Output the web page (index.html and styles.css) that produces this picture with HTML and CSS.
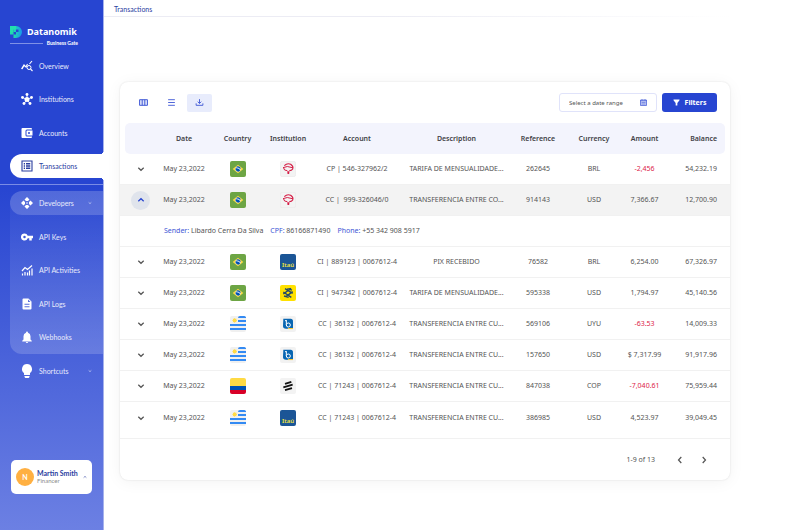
FILE: index.html
```html
<!DOCTYPE html>
<html lang="en">
<head>
<meta charset="utf-8">
<meta name="viewport" content="width=device-width, initial-scale=1">
<title>Datanomik - Transactions</title>
<link rel="stylesheet" href="styles.css">
</head>
<body>
<svg class="sprite" aria-hidden="true">
  <symbol id="down" viewBox="0 0 8 8"><path d="M1.3 2.7 4 5.3l2.7-2.6" fill="none" stroke="currentColor" stroke-width="1.2"/></symbol>
  <symbol id="up" viewBox="0 0 8 8"><path d="M1.3 5.3 4 2.7l2.7 2.6" fill="none" stroke="currentColor" stroke-width="1.2"/></symbol>
  <symbol id="brazil" viewBox="0 0 24 24"><rect width="24" height="24" rx="3" fill="#6da544"/><path d="M12 5.500 20 12l-8 6.500L4 12z" fill="#ffda44"/><circle cx="12" cy="12" r="3.900" fill="#e8f1f7"/><path d="M8.300 11q4.500-.8 7.100 3A3.900 3.900 0 0 1 8.300 11zM9 9.500a3.900 3.900 0 0 1 6.900 3Q13.500 9.500 9 9.500z" fill="#0052b4"/></symbol>
  <symbol id="uruguay" viewBox="0 0 24 24"><rect width="24" height="24" rx="3" fill="#f0f0f0"/><path d="M12 3a3 3 0 0 1 3-3h6q2 0 3 2v1H12zM12 6h12v3H12zM0 12h24v3H0zM0 18h24v3H0z" fill="#338af3"/><path d="m7 3 1 1.300 1.700-.3-.3 1.700 1.300 1-1.300 1 .3 1.700-1.700-.3-1 1.300-1-1.300-1.700.3.3-1.700-1.300-1 1.300-1L4.300 4l1.700.3z" fill="#ffda44"/></symbol>
  <symbol id="colombia" viewBox="0 0 24 24"><path d="M0 12V3a3 3 0 0 1 3-3h18a3 3 0 0 1 3 3v9z" fill="#ffda44"/><path d="M0 12h24v6H0z" fill="#0052b4"/><path d="M0 18h24v3a3 3 0 0 1-3 3H3a3 3 0 0 1-3-3z" fill="#d80027"/></symbol>
  <symbol id="bradesco" viewBox="0 0 24 24"><rect x=".5" y=".5" width="23" height="23" rx="3" fill="#f3f3f3" stroke="#e9e9e9"/><path d="M6.500 7Q11 2.500 16 5q4.500 3 3 7-1.500 2.500-5 2.500" fill="none" stroke="#d51c45" stroke-width="1.800"/><path d="M4.500 10q6-3.500 14 0M5.500 10.500q0 4 5.500 4" fill="none" stroke="#d51c45" stroke-width="1.500"/><path d="M10.800 15.500h3.400l-.5 4h-2.400z" fill="#d51c45"/></symbol>
  <symbol id="bb" viewBox="0 0 24 24"><rect width="24" height="24" rx="3" fill="#ffe100"/><path d="M7.500 5.500 19 12.500M5 10.500l12 8M16.500 5 5 13.500M19 10 7.500 18.500M11 5.500l7 2M6 16.500l7 2" fill="none" stroke="#244a68" stroke-width="2.100"/></symbol>
  <symbol id="bind" viewBox="0 0 24 24"><rect width="24" height="24" rx="3" fill="#f2f2f2"/><path d="M5 4h11q3.500 0 3.500 4v11H9q-4.500 0-4.500-4z" fill="#0866b2"/><path d="M12 18h7.500v1.600H12z" fill="#f4c93c"/><path d="M9.500 6.500v7q0 3 3 3t3-3q0-3-3-3-2 0-3 2M7.500 7H10" fill="none" stroke="#fff" stroke-width="1.500"/></symbol>
  <symbol id="bancolombia" viewBox="0 0 24 24"><rect width="24" height="24" rx="3" fill="#f3f3f3"/><path d="m7.500 8.800 9.500-3M5 14l14-4M7.500 18.200l10.500-3" fill="none" stroke="#111" stroke-width="2.800"/></symbol>
</svg>
<div class="app">
  <aside class="sidebar">
    <div class="brand">
      <div class="brand-row">
        <svg class="brand-mark" viewBox="0 0 24 24" aria-hidden="true"><defs><linearGradient id="mark"><stop offset=".3" stop-color="#1fdcae"/><stop offset="1" stop-color="#1897ee"/></linearGradient></defs><path fill="url(#mark)" d="M0 0h12a12 12 0 0 1 0 24H7v-7H0v-5h7v5h5v-5h5V7h-5v5H7V7z"/><path fill="#23dfae" d="M0 0h12v7H7v5H0z"/></svg>
        <span class="brand-name">Datanomik</span>
      </div>
      <div class="brand-sub"><span class="brand-line"></span>Business Gate</div>
    </div>
    <nav class="nav" aria-label="Main">
      <div class="group">
        <a class="item" href="#overview"><svg class="icon" viewBox="0 0 24 24"><path d="m1 18 5-8 4 4 3-6M17 8l5-6M2 18 6 11" fill="none" stroke="currentColor" stroke-width="2.200"/><circle cx="16" cy="15" r="4" fill="none" stroke="currentColor" stroke-width="2"/><path d="m19 18 4 4" stroke="currentColor" stroke-width="2.200"/></svg>Overview</a>
        <a class="item" href="#institutions"><svg class="icon" viewBox="0 0 24 24"><g fill="currentColor"><circle cx="12" cy="13" r="5"/><circle cx="12" cy="3" r="2.900"/><circle cx="3" cy="9" r="2.900"/><circle cx="21" cy="9" r="2.900"/><circle cx="6" cy="21" r="2.900"/><circle cx="18" cy="21" r="2.900"/></g><path d="M12 3v10L3 9m9 4 9-4m-9 4-6 8m6-8 6 8" fill="none" stroke="currentColor" stroke-width="1.600"/></svg>Institutions</a>
        <a class="item" href="#accounts"><svg class="icon" viewBox="0 0 24 24"><path fill="currentColor" fill-rule="evenodd" d="M3 2h17q2 0 2 2v1H12q-3 0-3 3v8q0 3 3 3h10v1q0 2-2 2H3q-2 0-2-2V4q0-2 2-2zm9 5h11v10H12q-1 0-1-1V8q0-1 1-1zm4 3a2 2 0 1 0 0 4 2 2 0 0 0 0-4z"/></svg>Accounts</a>
        <a class="item active" href="#transactions" aria-current="page"><svg class="icon" viewBox="0 0 24 24"><path d="M2 2h20v20H2z" fill="none" stroke="currentColor" stroke-width="2.200"/><path d="M5.500 7.500H8m2 0h8.500M5.500 12H8m2 0h8.500M5.500 16.500H8m2 0h8.500" stroke="currentColor" stroke-width="2.600"/></svg>Transactions</a>
      </div>
      <div class="submenu">
        <a class="item sub-head" href="#developers"><svg class="icon" viewBox="0 0 24 24"><path fill="currentColor" d="m12 0 5 5-3 3h-4L7 5zM12 24l5-5-3-3h-4l-3 3zM0 12l5-5 3 3v4l-3 3zM24 12l-5-5-3 3v4l3 3z"/><circle cx="12" cy="12" r="1.600" fill="currentColor"/></svg>Developers<svg class="caret"><use href="#down"/></svg></a>
        <div class="group">
          <a class="item" href="#keys"><svg class="icon" viewBox="0 0 24 24"><path fill="currentColor" fill-rule="evenodd" d="M7 5a7 7 0 0 1 6.500 4.500H24v5h-2.500V19h-5v-4.500h-3A7 7 0 1 1 7 5zm0 4.500a2.500 2.500 0 1 0 0 5 2.500 2.500 0 0 0 0-5z"/></svg>API Keys</a>
          <a class="item" href="#activities"><svg class="icon" viewBox="0 0 24 24"><path d="m2 14 6-7 5 4 9-8M3 23v-4m5 4v-7m5 7v-6m4 6V13m5 10V9" fill="none" stroke="currentColor" stroke-width="2.400"/></svg>API Activities</a>
          <a class="item" href="#logs"><svg class="icon" viewBox="0 0 24 24"><path fill="currentColor" fill-rule="evenodd" d="M5 1h10l6 6v14q0 2-2 2H5q-2 0-2-2V3q0-2 2-2zm9 2v5h5zM7 11.500v2h10v-2zm0 5v2h10v-2z"/></svg>API Logs</a>
          <a class="item" href="#webhooks"><svg class="icon" viewBox="0 0 24 24"><path fill="currentColor" d="M12 1q2 0 2 2.500 5 1.500 5 7V17l2.500 2.500V21h-19v-1.500L5 17v-6.500q0-5.500 5-7Q10 1 12 1zM9.500 22h5q-.5 2-2.500 2t-2.500-2z"/></svg>Webhooks</a>
        </div>
      </div>
      <a class="item shortcuts" href="#shortcuts"><svg class="icon bulb" viewBox="0 0 24 28"><path fill="currentColor" d="M12 0a10 10 0 0 1 6 18v3q0 1-1 1H7q-1 0-1-1v-3A10 10 0 0 1 12 0zM7 24h10v1.500q-1 2.500-2 2.500H9q-1 0-2-2.500z"/></svg>Shortcuts<svg class="caret"><use href="#down"/></svg></a>
    </nav>
    <button class="user" type="button">
      <span class="avatar">N</span>
      <span class="who"><strong>Martin Smith</strong><span>Financer</span></span>
      <svg class="caret"><use href="#up"/></svg>
    </button>
  </aside>
  <main class="main">
    <header class="topbar"><h1>Transactions</h1></header>
    <section class="card">
      <div class="toolbar">
        <button class="tool" type="button" aria-label="Columns"><svg viewBox="0 0 16 12"><path d="M1 1h14v10H1zM5.700 1v10M10.300 1v10" fill="#dfe4fa" stroke="currentColor" stroke-width="1.700"/></svg></button>
        <button class="tool" type="button" aria-label="Density"><svg viewBox="0 0 16 12"><path d="M2 1h12M2 6h12M2 11h12" stroke="currentColor" stroke-width="1.600"/></svg></button>
        <button class="tool on" type="button" aria-label="Download"><svg viewBox="0 0 16 12"><path d="M8 0v7.500M4.800 4.500 8 7.700l3.200-3.200M2 7.500V11h12V7.500" fill="none" stroke="currentColor" stroke-width="1.600"/></svg></button>
        <label class="date"><input type="text" placeholder="Select a date range" aria-label="Date range"><svg viewBox="0 0 14 14"><path d="M1 2h12v11H1z" fill="#c3cbf4" stroke="currentColor" stroke-width="1.400"/><path d="M1 3.500h12M4 0v3m6-3v3M3 7h8M3 10h8" stroke="currentColor" stroke-width="1"/></svg></label>
        <button class="filters" type="button"><svg viewBox="0 0 14 14"><path d="M1 1h12v1.500L8.700 8v5H5.300V8L1 2.500z" fill="currentColor"/></svg>Filters</button>
      </div>
      <table>
        <colgroup><col class="c-toggle"><col class="c-date"><col class="c-country"><col class="c-inst"><col class="c-account"><col class="c-desc"><col class="c-ref"><col class="c-cur"><col class="c-amount"><col class="c-balance"></colgroup>
        <thead><tr><th></th><th>Date</th><th>Country</th><th>Institution</th><th>Account</th><th>Description</th><th>Reference</th><th>Currency</th><th>Amount</th><th>Balance</th></tr></thead>
        <tbody>
          <tr><td><button class="toggle" type="button" aria-label="Expand"><svg><use href="#down"/></svg></button></td><td>May 23,2022</td><td><svg class="badge"><use href="#brazil"/></svg></td><td><svg class="badge"><use href="#bradesco"/></svg></td><td>CP | 546-327962/2</td><td>TARIFA DE MENSUALIDADE...</td><td>262645</td><td>BRL</td><td class="neg">-2,456</td><td>54,232.19</td></tr>
          <tr class="open"><td><button class="toggle" type="button" aria-label="Collapse"><svg><use href="#up"/></svg></button></td><td>May 23,2022</td><td><svg class="badge"><use href="#brazil"/></svg></td><td><svg class="badge"><use href="#bradesco"/></svg></td><td>CC |&nbsp; 999-326046/0</td><td>TRANSFERENCIA ENTRE CO...</td><td>914143</td><td>USD</td><td>7,366.67</td><td>12,700.90</td></tr>
          <tr class="details"><td></td><td colspan="9"><div class="facts"><span><b>Sender:</b> Libardo Cerra Da Silva</span><span><b>CPF:</b> 86166871490</span><span><b>Phone:</b> +55 342 908 5917</span></div></td></tr>
          <tr><td><button class="toggle" type="button" aria-label="Expand"><svg><use href="#down"/></svg></button></td><td>May 23,2022</td><td><svg class="badge"><use href="#brazil"/></svg></td><td><div class="badge itau">Itaú</div></td><td>CI | 889123 | 0067612-4</td><td>PIX RECEBIDO</td><td>76582</td><td>BRL</td><td>6,254.00</td><td>67,326.97</td></tr>
          <tr><td><button class="toggle" type="button" aria-label="Expand"><svg><use href="#down"/></svg></button></td><td>May 23,2022</td><td><svg class="badge"><use href="#brazil"/></svg></td><td><svg class="badge"><use href="#bb"/></svg></td><td>CI | 947342 | 0067612-4</td><td>TARIFA DE MENSUALIDADE...</td><td>595338</td><td>USD</td><td>1,794.97</td><td>45,140.56</td></tr>
          <tr><td><button class="toggle" type="button" aria-label="Expand"><svg><use href="#down"/></svg></button></td><td>May 23,2022</td><td><svg class="badge"><use href="#uruguay"/></svg></td><td><svg class="badge"><use href="#bind"/></svg></td><td>CC | 36132 | 0067612-4</td><td>TRANSFERENCIA ENTRE CU...</td><td>569106</td><td>UYU</td><td class="neg">-63.53</td><td>14,009.33</td></tr>
          <tr><td><button class="toggle" type="button" aria-label="Expand"><svg><use href="#down"/></svg></button></td><td>May 23,2022</td><td><svg class="badge"><use href="#uruguay"/></svg></td><td><svg class="badge"><use href="#bind"/></svg></td><td>CC | 36132 | 0067612-4</td><td>TRANSFERENCIA ENTRE CU...</td><td>157650</td><td>USD</td><td>$ 7,317.99</td><td>91,917.96</td></tr>
          <tr><td><button class="toggle" type="button" aria-label="Expand"><svg><use href="#down"/></svg></button></td><td>May 23,2022</td><td><svg class="badge"><use href="#colombia"/></svg></td><td><svg class="badge"><use href="#bancolombia"/></svg></td><td>CC | 71243 | 0067612-4</td><td>TRANSFERENCIA ENTRE CU...</td><td>847038</td><td>COP</td><td class="neg">-7,040.61</td><td>75,959.44</td></tr>
          <tr><td><button class="toggle" type="button" aria-label="Expand"><svg><use href="#down"/></svg></button></td><td>May 23,2022</td><td><svg class="badge"><use href="#uruguay"/></svg></td><td><div class="badge itau">Itaú</div></td><td>CC | 71243 | 0067612-4</td><td>TRANSFERENCIA ENTRE CU...</td><td>386985</td><td>USD</td><td>4,523.97</td><td>39,049.45</td></tr>
        </tbody>
      </table>
      <footer class="pager">
        <span>1-9 of 13</span>
        <button type="button" aria-label="Previous page"><svg viewBox="0 0 8 8"><path d="M5.300 1 2.500 4l2.800 3" fill="none" stroke="currentColor" stroke-width="1.200"/></svg></button>
        <button type="button" aria-label="Next page"><svg viewBox="0 0 8 8"><path d="M2.700 1l2.800 3-2.800 3" fill="none" stroke="currentColor" stroke-width="1.200"/></svg></button>
      </footer>
    </section>
  </main>
</div>
</body>
</html>
```
FILE: styles.css
```css
* { box-sizing: border-box; }

body {
  margin: 0;
  background: #fff;
  color: #545454;
  font-family: "Noto Sans", "Open Sans", sans-serif;
  font-size: 7px;
  line-height: 10px;
}

button, input {
  margin: 0;
  padding: 0;
  border: 0;
  background: none;
  color: inherit;
  font: inherit;
}

svg { display: block; flex: none; }
.sprite { position: absolute; width: 0; height: 0; }

.app { display: flex; min-height: 100vh; }

/* Sidebar */
.sidebar {
  display: flex;
  flex-direction: column;
  flex: none;
  width: 104px;
  padding-bottom: 36px;
  border-right: 1px solid #a6b2ec;
  background: linear-gradient(#2745d1 35%, #6c80e3);
  color: #e9ecfb;
  font-family: Lato, sans-serif;
}

.brand { padding: 26px 10px 0; }
.brand-row { display: flex; align-items: center; gap: 5px; height: 12px; }
.brand-mark { width: 12px; height: 12px; }
.brand-name { color: #fff; font: 700 9px/12px "Noto Sans", sans-serif; }
.brand-sub {
  display: flex;
  align-items: center;
  gap: 4px;
  width: 68px;
  padding-top: 2px;
  color: #fff;
  font-size: 5px;
  line-height: 6px;
  font-weight: 700;
  white-space: nowrap;
}
.brand-line { flex: 1; height: 1px; background: #8091e6; }

.nav { padding-top: 3px; }
.group { display: grid; grid-auto-rows: 1fr; align-items: center; height: 134px; }
.item {
  position: relative;
  display: flex;
  align-items: center;
  gap: 6px;
  height: 24px;
  margin-left: 10px;
  padding: 0 11px;
  color: inherit;
  text-decoration: none;
}
.icon { width: 12px; height: 12px; color: #fff; }
.bulb { height: 14px; }
.caret { width: 4px; height: 4px; margin-left: auto; }

.active {
  margin-right: -1px;
  border-radius: 12px 0 0 12px;
  background: #fff;
  color: #2b3e9f;
}
.active .icon { color: #2b3e9f; }
.active::before, .active::after {
  content: "";
  position: absolute;
  right: 0;
  width: 4px;
  height: 4px;
}
.active::before { bottom: 100%; background: radial-gradient(circle at 0 0, transparent 4px, #fff 4px); }
.active::after { top: 100%; background: radial-gradient(circle at 0 100%, transparent 4px, #fff 4px); }

.submenu {
  position: relative;
  margin: 8px 0 0 10px;
  border-radius: 12px 0 0 12px;
  background: linear-gradient(rgba(255, 255, 255, 0.02), rgba(255, 255, 255, 0.17));
}
.submenu::before {
  content: "";
  position: absolute;
  top: -7px;
  left: -10px;
  right: 0;
  height: 1px;
  background: #7a8ce5;
}
.submenu .item { margin-left: 0; }
.sub-head {
  margin-bottom: 5px;
  border-radius: 12px 0 0 12px;
  background: rgba(255, 255, 255, 0.18);
}
.shortcuts { margin-top: 5px; }

.user {
  display: flex;
  align-items: center;
  gap: 3px;
  height: 34px;
  margin: auto 11px 0;
  padding: 0 5px;
  border-radius: 5px;
  background: #fff;
  color: #2b3e9f;
  text-align: left;
}
.avatar {
  flex: none;
  width: 18px;
  border-radius: 50%;
  background: #ffb042;
  color: #fff;
  font-weight: 700;
  line-height: 18px;
  text-align: center;
}
.who { display: grid; line-height: 8px; white-space: nowrap; }
.who span { color: #8c8c8c; font-size: 6px; }

/* Main area */
.main { flex: 1; min-width: 0; }
.topbar {
  height: 17px;
  padding: 4px 10px 0;
  background: linear-gradient(to right, #ececf4 40%, #fff 90%) bottom / 100% 1px no-repeat;
}
h1 { margin: 0; color: #2b3e9f; font: 400 7px/10px Lato, sans-serif; }

.card {
  margin: 65px 70px 50px 16px;
  border-radius: 8px;
  background: #fff;
  box-shadow: 0 0 2px rgba(0, 0, 0, 0.12), 0 2px 16px rgba(0, 0, 0, 0.05);
}

.toolbar { display: flex; align-items: center; gap: 3px; padding: 11px 13px 11px 11px; }
.tool {
  display: grid;
  place-items: center;
  width: 25px;
  height: 18px;
  border-radius: 2px;
  color: #3d56d5;
}
.tool svg { width: 9px; height: 7px; }
.tool.on { background: #e8ecfc; }
.date {
  display: flex;
  align-items: center;
  width: 98px;
  height: 19px;
  margin-left: auto;
  padding: 0 9px;
  border: 1px solid #e0e3fa;
  border-radius: 3px;
}
.date input { flex: 1; min-width: 0; outline: 0; font-size: 6px; }
.date input::placeholder { color: #545454; opacity: 1; }
.date svg { width: 7px; height: 7px; color: #3d56d5; }
.filters {
  display: flex;
  align-items: center;
  justify-content: center;
  gap: 5px;
  width: 55px;
  height: 19px;
  margin-left: 2px;
  border-radius: 3px;
  background: #2745d1;
  color: #fff;
  font-weight: 700;
}
.filters svg { width: 7px; height: 7px; }

/* Table */
table { width: 100%; table-layout: fixed; border-spacing: 0; }
.c-toggle { width: 39px; }
.c-date { width: 50px; }
.c-country { width: 57px; }
.c-inst { width: 44px; }
.c-account { width: 94px; }
.c-desc { width: 105px; }
.c-ref { width: 58px; }
.c-cur { width: 54px; }
.c-amount { width: 47px; }
.c-balance { width: 62px; }

th, td { height: 31px; padding: 0; text-align: center; white-space: nowrap; }
th { background: #f3f4fd padding-box; color: #3f3f46; font-weight: 600; }
th:first-child { border-left: 5px solid transparent; border-radius: 10px 0 0 10px / 5px 0 0 5px; }
th:last-child {
  padding-right: 8px;
  border-right: 5px solid transparent;
  border-radius: 0 10px 10px 0 / 0 5px 5px 0;
  text-align: right;
}
td { border-bottom: 1px solid #f1f1f1; }
td:last-child { padding-right: 13px; text-align: right; }
td:first-child { padding-left: 2px; }
tbody tr:last-child td { height: 37px; padding-bottom: 5px; }
.open td { background: #f3f3f3; }
.neg { color: #dc2348; }
.badge { width: 16px; height: 16px; margin: 0 auto; }
.itau {
  padding-top: 7px;
  border-radius: 2px;
  background: #1b5596;
  color: #f2e83b;
  font-size: 6px;
  line-height: 8px;
  font-weight: 600;
}
.toggle {
  display: grid;
  place-items: center;
  width: 19px;
  height: 19px;
  margin: 0 auto;
  border-radius: 50%;
}
.toggle svg { width: 8px; height: 8px; }
.open .toggle { background: #e0e4ec; color: #2745d1; }
.facts { display: flex; gap: 7px; padding-left: 5px; }
.facts b { color: #3d56d5; font-weight: 400; }

.pager { display: flex; align-items: center; justify-content: flex-end; height: 41px; padding-right: 18px; }
.pager button { display: grid; place-items: center; width: 16px; height: 16px; margin-left: 8px; }
.pager span { margin-right: 9px; }
.pager svg { width: 8px; height: 8px; }
```
